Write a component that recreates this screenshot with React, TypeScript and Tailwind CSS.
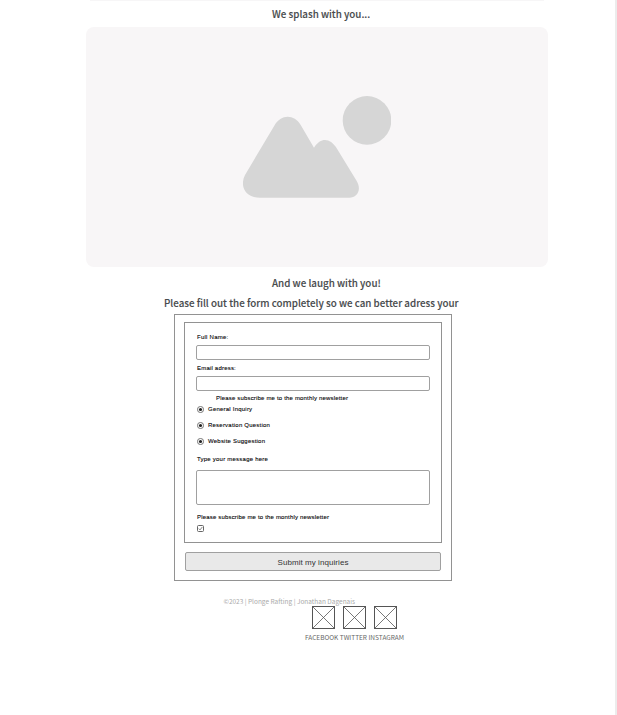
import type { ReactNode } from "react";

const sans = "font-['Noto_Sans_CJK_SC',sans-serif]";
const arial = "font-['Liberation_Sans',Arial,sans-serif]";

function Heading({ className, children }: { className: string; children: ReactNode }) {
  return <h2 className={`${sans} h-5 whitespace-nowrap text-[9.8px] font-medium leading-5 text-[#484b4d] [-webkit-text-stroke:0.1px_#484b4d] ${className}`}>{children}</h2>;
}

function Label({ className = "", children }: { className?: string; children: ReactNode }) {
  return <span className={`block h-2 whitespace-nowrap text-[6px] leading-2 text-black [-webkit-text-stroke:0.1px_#000] ${className}`}>{children}</span>;
}

function Radio({ className, children }: { className: string; children: ReactNode }) {
  return (
    <div className={`flex h-2 items-center gap-1 ${className}`}>
      <svg viewBox="0 0 8 8" className="size-[7px] shrink-0">
        <circle cx="4" cy="4" r="3.5" fill="white" stroke="#555" strokeWidth="0.9" />
        <circle cx="4" cy="4" r="1.8" fill="#222" />
      </svg>
      <Label className="tracking-[0.22px]">{children}</Label>
    </div>
  );
}

function Crossed() {
  return (
    <svg viewBox="0 0 23 23" className="size-[23px]" fill="none" stroke="#555">
      <rect x="0.5" y="0.5" width="22" height="22" />
      <path d="M0.5 0.5 22.5 22.5M22.5 0.5 0.5 22.5" strokeWidth="0.8" />
    </svg>
  );
}

export default function App() {
  return (
    <div className="h-[715px] w-[617px] overflow-hidden border-r-2 border-[#ececec] bg-white">
      <div className="ml-[86px] flex w-[462px] flex-col">
        <div className="mx-1 h-px bg-[#f7f6f7]" />
        <Heading className="mt-[3px] ml-[186px]">We splash with you...</Heading>
        <div className="mt-[3px] h-60 rounded-lg bg-[#f8f6f7] pt-[69px] pl-[157px]">
          <svg viewBox="0 0 148 102" className="h-[102px] w-[148px]" fill="#d6d6d6">
            <circle cx="124" cy="24.4" r="24.3" />
            <path d="M31.3 29.7C38 18 51 18 57.7 29L71 51.7C78 41 87 42 93.7 52.3L113.7 85C119 94 114 101.7 106.3 101.7H17C2 101.7-3.5 90 2 79Z" />
          </svg>
        </div>
        <Heading className="mt-1.5 ml-[186px]">And we laugh with you!</Heading>
        <Heading className="ml-[78px]">Please fill out the form completely so we can better adress your</Heading>

        <form className={`${arial} mt-px ml-[88px] h-[267px] w-[278px] border border-[#929292] px-[9px] pt-[7px]`} onSubmit={(e) => e.preventDefault()}>
          <div className="flex h-[221px] flex-col border border-[#929292] pt-2.5 pl-[12px]">
            <Label className="tracking-[0.25px]">Full Name:</Label>
            <input aria-label="Full Name" className="mt-1 -ml-px h-[15px] w-[234px] rounded-xs border border-[#a0a0a0]" />
            <Label className="mt-1 tracking-[0.2px]">Email adress:</Label>
            <input aria-label="Email adress" className="mt-1 -ml-px h-[15px] w-[234px] rounded-xs border border-[#a0a0a0]" />
            <Label className="mt-[3px] ml-[19px] tracking-[0.18px]">Please subscribe me to the monthly newsletter</Label>
            <Radio className="mt-[3px]">General Inquiry</Radio>
            <Radio className="mt-2">Reservation Question</Radio>
            <Radio className="mt-2">Website Suggestion</Radio>
            <Label className="mt-2.5 tracking-[0.23px]">Type your message here</Label>
            <textarea aria-label="Message" className="mt-[7px] -ml-px h-[35px] w-[234px] shrink-0 resize-none rounded-xs border border-[#a0a0a0]" />
            <Label className="mt-2 tracking-[0.18px]">Please subscribe me to the monthly newsletter</Label>
            <svg viewBox="0 0 7 7" className="mt-1 size-[7px]" fill="none" stroke="#666">
              <rect x="0.5" y="0.5" width="6" height="6" rx="1" />
              <path d="m1.8 3.6 1.2 1.3 2.4-3" strokeWidth="0.8" />
            </svg>
          </div>
          <button className="mt-[9px] ml-px block h-[19px] w-[256px] rounded-xs border border-[#a0a0a0] bg-[#e9e9e9] pt-0.5 text-[8px] leading-[16px] tracking-[0.06px] text-[#333]">Submit my inquiries</button>
        </form>

        <footer className={`${sans} mt-4 whitespace-nowrap`}>
          <p className="ml-[137.5px] h-[9px] text-[6.5px] leading-[9px] text-[#aaa]">©2023 | Plonge Rafting | Jonathan Dagenais</p>
          <div className="ml-[225.5px] flex gap-2">
            <Crossed />
            <Crossed />
            <Crossed />
          </div>
          <p className="mt-[3px] ml-[219px] h-[10px] text-[6.5px] leading-[10px] text-[#666]">FACEBOOK TWITTER INSTAGRAM</p>
        </footer>
      </div>
    </div>
  );
}
